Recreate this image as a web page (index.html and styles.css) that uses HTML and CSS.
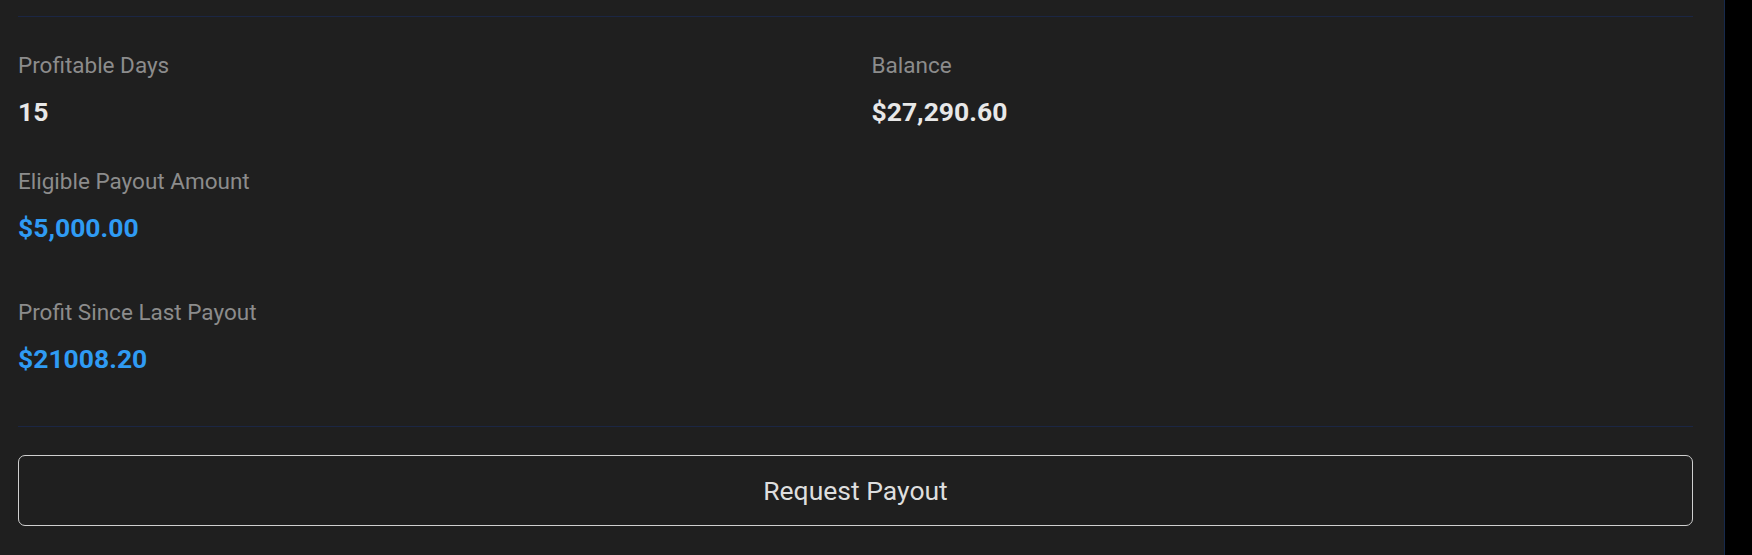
FILE: index.html
```html
<!DOCTYPE html>
<html lang="en">
  <head>
    <meta charset="UTF-8" />
    <meta name="viewport" content="width=device-width, initial-scale=1.0" />
    <title>Payout</title>
    <link rel="stylesheet" href="styles.css">
  </head>
  <body>
    <div class="page">
      <main class="panel">
        <hr class="divider" />
        <section class="stats">
          <div class="stat">
            <div class="stat-label">Profitable Days</div>
            <div class="stat-value">15</div>
          </div>
          <div class="stat">
            <div class="stat-label">Balance</div>
            <div class="stat-value">$27,290.60</div>
          </div>
          <div class="stat">
            <div class="stat-label">Eligible Payout Amount</div>
            <div class="stat-value highlight">$5,000.00</div>
          </div>
        </section>
        <section class="stat profit">
          <div class="stat-label">Profit Since Last Payout</div>
          <div class="stat-value highlight">$21008.20</div>
        </section>
        <hr class="divider bottom" />
        <button type="button" class="payout-btn">Request Payout</button>
      </main>
      <div class="gutter"></div>
    </div>
  </body>
</html>
```

FILE: styles.css
```css
html,
body {
  margin: 0;
  height: 100%;
}
body {
  font-family: Roboto, "Liberation Sans", Arial, sans-serif;
  background-color: #000;
  color: #e6e6e6;
}
.page {
  display: flex;
  height: 555px;
}
.panel {
  flex: 1;
  background-color: #1f1f1f;
  padding: 16px 31px 0 18px;
}
.gutter {
  width: 27px;
  border-left: 1px solid #172a4c;
  background-color: #000;
}
.divider {
  border: none;
  height: 1px;
  margin: 0;
  background-color: #1b2644;
}
.divider.bottom {
  margin-top: 52px;
}
.stats {
  display: grid;
  grid-template-columns: 1fr 1fr;
  column-gap: 32px;
  row-gap: 41px;
  margin-top: 35px;
}
.stat-label {
  font-size: 22.5px;
  line-height: 26px;
  color: #8c8c8c;
  margin-bottom: 18px;
}
.stat-value {
  font-size: 26.5px;
  line-height: 31px;
  font-weight: 700;
  color: #e8e8e8;
}
.stat-value.highlight {
  color: #2f9bf3;
}
.profit {
  margin-top: 56px;
}
.payout-btn {
  display: block;
  width: 100%;
  height: 71px;
  margin-top: 28px;
  background: transparent;
  border: 1px solid #cfcfcf;
  border-radius: 7px;
  color: #dedede;
  font-family: inherit;
  font-size: 26.5px;
  cursor: pointer;
}
.payout-btn:hover {
  background-color: #262626;
}
```
